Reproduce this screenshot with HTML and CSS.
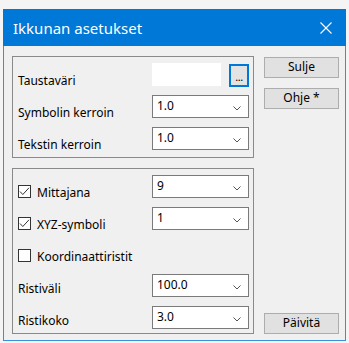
FILE: index.html
```html
<!DOCTYPE html>
<html lang="fi">
<head>
<meta charset="utf-8">
<title>Ikkunan asetukset</title>
<link rel="stylesheet" href="styles.css">
</head>
<body>
<div class="window">
  <div class="titlebar">
    <span class="title">Ikkunan asetukset</span>
    <svg class="close" width="12" height="12" viewBox="0 0 12 12"><path d="M0.5 0.5 L11.5 11.5 M11.5 0.5 L0.5 11.5" stroke="#fff" stroke-width="1.1" fill="none"/></svg>
  </div>
  <div class="content">
    <div class="left">
      <div class="group g1">
        <div class="row">
          <span class="label">Taustaväri</span>
          <div class="colorpick">
            <div class="swatch"></div>
            <div class="dots">...</div>
          </div>
        </div>
        <div class="row">
          <span class="label">Symbolin kerroin</span>
          <div class="combo"><span>1.0</span><svg class="chev" width="8" height="5" viewBox="0 0 8 5"><polyline points="0.5,0.5 4,4 7.5,0.5" fill="none" stroke="#555" stroke-width="1"/></svg></div>
        </div>
        <div class="row">
          <span class="label">Tekstin kerroin</span>
          <div class="combo"><span>1.0</span><svg class="chev" width="8" height="5" viewBox="0 0 8 5"><polyline points="0.5,0.5 4,4 7.5,0.5" fill="none" stroke="#555" stroke-width="1"/></svg></div>
        </div>
      </div>
      <div class="group g2">
        <div class="row">
          <label class="check"><span class="box"><svg width="11" height="11" viewBox="0 0 11 11"><polyline points="1,5.5 3.8,8.5 10,1.8" fill="none" stroke="#333" stroke-width="1"/></svg></span><span class="clabel">Mittajana</span></label>
          <div class="combo"><span>9</span><svg class="chev" width="8" height="5" viewBox="0 0 8 5"><polyline points="0.5,0.5 4,4 7.5,0.5" fill="none" stroke="#555" stroke-width="1"/></svg></div>
        </div>
        <div class="row">
          <label class="check"><span class="box"><svg width="11" height="11" viewBox="0 0 11 11"><polyline points="1,5.5 3.8,8.5 10,1.8" fill="none" stroke="#333" stroke-width="1"/></svg></span><span class="clabel">XYZ-symboli</span></label>
          <div class="combo"><span>1</span><svg class="chev" width="8" height="5" viewBox="0 0 8 5"><polyline points="0.5,0.5 4,4 7.5,0.5" fill="none" stroke="#555" stroke-width="1"/></svg></div>
        </div>
        <div class="row">
          <label class="check"><span class="box"></span><span class="clabel">Koordinaattiristit</span></label>
        </div>
        <div class="row spaced">
          <span class="label">Ristiväli</span>
          <div class="combo"><span>100.0</span><svg class="chev" width="8" height="5" viewBox="0 0 8 5"><polyline points="0.5,0.5 4,4 7.5,0.5" fill="none" stroke="#555" stroke-width="1"/></svg></div>
        </div>
        <div class="row">
          <span class="label">Ristikoko</span>
          <div class="combo"><span>3.0</span><svg class="chev" width="8" height="5" viewBox="0 0 8 5"><polyline points="0.5,0.5 4,4 7.5,0.5" fill="none" stroke="#555" stroke-width="1"/></svg></div>
        </div>
      </div>
    </div>
    <div class="right">
      <button class="btn first">Sulje</button>
      <button class="btn">Ohje *</button>
      <button class="btn last">Päivitä</button>
    </div>
  </div>
</div>
</body>
</html>
```
FILE: styles.css
```css
* { box-sizing: border-box; }
html, body { margin: 0; }
body {
  background: #f4f4f4;
  padding: 9px 3px 3px 3px;
  font-family: "Noto Sans", "Open Sans", sans-serif;
  font-size: 12px;
  color: #000;
}
.window {
  width: 343px;
  background: #f0f0f0;
  border: 1px solid #3a8fd9;
  border-top: none;
}
.titlebar {
  height: 37px;
  margin: 0 -1px;
  background: #0078d7;
  color: #fff;
  display: flex;
  align-items: center;
  justify-content: space-between;
  padding: 0 14px 0 10px;
}
.title {
  font-size: 15px;
  line-height: 20px;
}
.close { display: block; margin-top: 1px; }
.content {
  display: flex;
  gap: 10px;
  padding: 10px 6px 6px 8px;
}
.left {
  display: flex;
  flex-direction: column;
  gap: 10px;
  width: 243px;
}
.group {
  border: 1px solid #8a8a8a;
  display: flex;
  flex-direction: column;
  gap: 9px;
  padding: 6px 4px 7px 5px;
}
.g2 { padding-bottom: 4px; }
.row {
  height: 23px;
  display: flex;
  align-items: flex-start;
  justify-content: space-between;
}
.row.spaced { margin-top: 3px; }
.label {
  line-height: 15px;
  margin-top: 10px;
  white-space: nowrap;
}
.g2 .label { margin-top: 7px; }
.colorpick {
  display: flex;
  gap: 8px;
  width: 97px;
}
.swatch {
  width: 69px;
  height: 23px;
  background: #fff;
}
.dots {
  width: 20px;
  height: 23px;
  margin-top: 1px;
  border: 2px solid #0078d7;
  background: #e3e3e3;
  text-align: center;
  line-height: 22px;
  font-size: 11px;
  letter-spacing: -0.5px;
}
.combo {
  width: 97px;
  height: 23px;
  background: #fff;
  border: 1px solid #7a7a7a;
  display: flex;
  align-items: center;
  justify-content: space-between;
  padding: 0 7px 0 4px;
  line-height: 15px;
}
.combo span { margin-top: -2px; }
.chev { display: block; margin-top: 3px; }
.check {
  display: flex;
  align-items: flex-start;
  gap: 6px;
}
.box {
  width: 13px;
  height: 13px;
  margin-top: 10px;
  border: 1px solid #333;
  background: #fff;
  display: flex;
  align-items: center;
  justify-content: center;
}
.box svg { display: block; }
.clabel {
  line-height: 15px;
  margin-top: 10px;
  white-space: nowrap;
}
.right {
  width: 75px;
  display: flex;
  flex-direction: column;
  gap: 10px;
}
.btn {
  width: 75px;
  height: 21px;
  border: 1px solid #adadad;
  background: #e1e1e1;
  font-family: "Noto Sans", "Open Sans", sans-serif;
  font-size: 12px;
  line-height: 15px;
  padding: 0 0 2px 0;
  color: #000;
}
.btn.first { margin-top: 1px; }
.btn.last { margin-top: auto; }
```
